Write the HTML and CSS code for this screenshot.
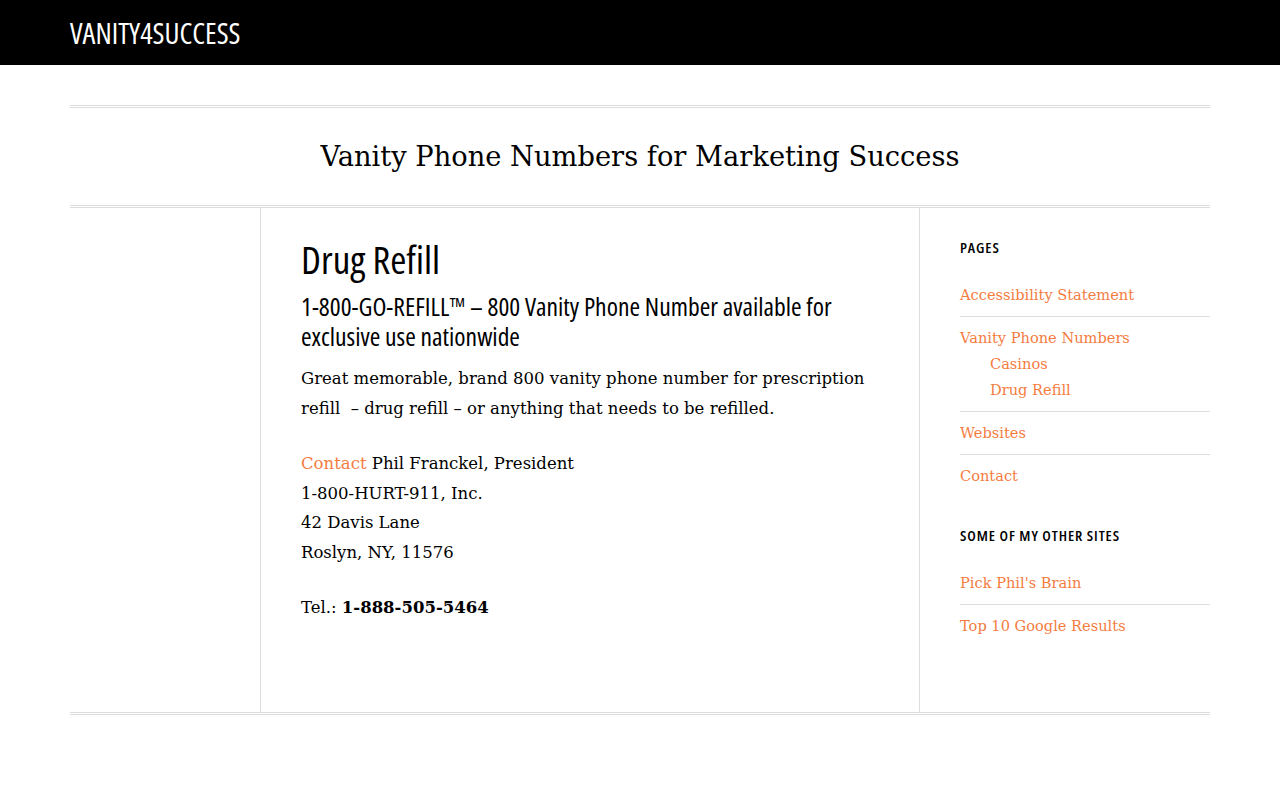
FILE: index.html
```html
<!DOCTYPE html>
<html lang="en">
<head>
<meta charset="utf-8">
<title>Drug Refill – Vanity4Success</title>
<link rel="stylesheet" href="styles.css">
</head>
<body>
<header class="topbar">
  <div class="topbar-inner">
    <a class="logo" href="#">VANITY4SUCCESS</a>
  </div>
</header>
<div class="container">
  <div class="site-title">Vanity Phone Numbers for Marketing Success</div>
  <div class="columns">
    <div class="left-col"></div>
    <main class="main-col">
      <h1 class="entry-title">Drug Refill</h1>
      <h2 class="entry-sub">1-800-GO-REFILL™ – 800 Vanity Phone Number available for exclusive use nationwide</h2>
      <p>Great memorable, brand 800 vanity phone number for prescription refill &nbsp;– drug refill – or anything that needs to be refilled.</p>
      <p><a href="#">Contact</a> Phil Franckel, President<br>1-800-HURT-911, Inc.<br>42 Davis Lane<br>Roslyn, NY, 11576</p>
      <p>Tel.: <strong>1-888-505-5464</strong></p>
    </main>
    <aside class="sidebar">
      <section class="widget">
        <h3 class="widget-title">Pages</h3>
        <ul class="menu">
          <li><a href="#">Accessibility Statement</a></li>
          <li><a href="#">Vanity Phone Numbers</a>
            <ul class="submenu">
              <li><a href="#">Casinos</a></li>
              <li><a href="#">Drug Refill</a></li>
            </ul>
          </li>
          <li><a href="#">Websites</a></li>
          <li class="last"><a href="#">Contact</a></li>
        </ul>
      </section>
      <section class="widget">
        <h3 class="widget-title">Some of my other sites</h3>
        <ul class="menu">
          <li><a href="#">Pick Phil's Brain</a></li>
          <li class="last"><a href="#">Top 10 Google Results</a></li>
        </ul>
      </section>
    </aside>
  </div>
</div>
</body>
</html>
```
FILE: styles.css
```css
* { box-sizing: border-box; }
html, body { margin: 0; padding: 0; }
body {
  background: #fff;
  color: #000;
  font-family: "DejaVu Serif", serif;
  font-size: 16.5px;
}
a { color: #f47c3f; text-decoration: none; }

.topbar { background: #000; height: 65px; }
.topbar-inner { width: 1140px; margin: 0 auto; height: 65px; display: flex; align-items: center; }
.logo {
  color: #fff;
  font-family: "Open Sans", sans-serif;
  font-stretch: 75%;
  font-weight: 500;
  font-size: 29px;
  line-height: 1;
  padding-top: 0;
}

.container {
  width: 1140px;
  margin: 40px auto 0;
  border-top: 3px double #ddd;
  border-bottom: 3px double #ddd;
}
.site-title {
  text-align: center;
  font-size: 27.3px;
  height: 100px;
  line-height: 98px;
  border-bottom: 3px double #ddd;
}
.columns { display: flex; }
.left-col { width: 191px; border-right: 1px solid #ddd; flex: none; }
.main-col {
  width: 659px;
  flex: none;
  border-right: 1px solid #ddd;
  padding: 31px 40px 63px;
}
.entry-title {
  margin: 0;
  font-family: "Open Sans", sans-serif;
  font-stretch: 75%;
  font-weight: 500;
  font-size: 39px;
  line-height: 40px;
}
.entry-sub {
  margin: 13px 0 12px;
  font-family: "Open Sans", sans-serif;
  font-stretch: 75%;
  font-weight: 500;
  font-size: 25.6px;
  line-height: 30px;
}
.main-col p { margin: 0 0 26px; line-height: 29.5px; }
.main-col p:last-child { margin-bottom: 26px; }

.sidebar { flex: 1; padding: 29px 0 0 40px; }
.widget { margin-bottom: 28px; }
.widget-title {
  margin: 0 0 17px;
  font-family: "Open Sans", sans-serif;
  font-stretch: 75%;
  font-weight: 600;
  font-size: 15px;
  letter-spacing: 0.9px;
  line-height: 20px;
  text-transform: uppercase;
}
.menu { list-style: none; margin: 0; padding: 0; font-size: 14.6px; }
.menu > li { padding: 8px 0; line-height: 26px; border-bottom: 1px solid #ddd; }
.menu > li.last { border-bottom: none; }
.submenu { list-style: none; margin: 0; padding: 0 0 0 30px; }
.submenu li { line-height: 26px; }
```
